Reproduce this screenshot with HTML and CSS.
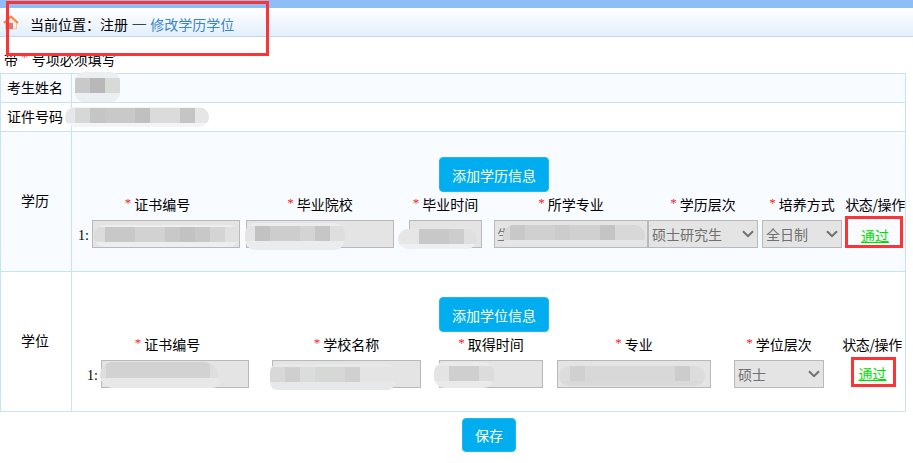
FILE: index.html
```html
<!DOCTYPE html>
<html lang="zh-CN">
<head>
<meta charset="utf-8">
<title>修改学历学位</title>
<link rel="stylesheet" href="styles.css">
</head>
<body>
<div class="page">
  <div class="band"></div>
  <div class="crumbs">
    <svg class="home" viewBox="0 0 16 15" width="16" height="15">
      <path d="M2.5 7.5V14H13.5V7.5L8 2.5Z" fill="#f6ece6" stroke="#e8c4a8" stroke-width="1"/>
      <path d="M1 8L8 1.5L15 8" fill="none" stroke="#ee8a3c" stroke-width="2"/>
      <rect x="6" y="8" width="4" height="6" fill="#d9787a"/>
    </svg>
    <span class="crumb-text">当前位置：注册 <span class="dash">—</span> <a class="crumb-link">修改学历学位</a></span>
  </div>
  <div class="note">带 <span class="star">*</span> 号项必须填写</div>
  <table class="form">
    <colgroup><col class="c-label"><col></colgroup>
    <tr class="row-short shade">
      <td class="label">考生姓名</td>
      <td class="value"><span class="smudge sm-name"></span></td>
    </tr>
    <tr class="row-short">
      <td class="label">证件号码</td>
      <td class="value"><span class="smudge sm-id"></span></td>
    </tr>
    <tr class="row-tall shade">
      <td class="label">学历</td>
      <td class="block">
        <div class="add"><button class="btn btn-add" type="button">添加学历信息</button></div>
        <div class="grid grid-edu">
          <div class="head"><span class="star">*</span>证书编号</div>
          <div class="head"><span class="star">*</span>毕业院校</div>
          <div class="head"><span class="star">*</span>毕业时间</div>
          <div class="head"><span class="star">*</span>所学专业</div>
          <div class="head"><span class="star">*</span>学历层次</div>
          <div class="head"><span class="star">*</span>培养方式</div>
          <div class="head head-status">状态/操作</div>

          <div class="cell cell-first e1"><span class="num">1:</span><div class="field w148"><input class="inp" disabled><span class="smudge sm-e1"></span></div></div>
          <div class="cell"><div class="field w148"><input class="inp" disabled><span class="smudge sm-e2"></span></div></div>
          <div class="cell"><div class="field w73"><input class="inp" disabled><span class="smudge sm-e3"></span></div></div>
          <div class="cell"><div class="field w154"><input class="inp" disabled value="生"><span class="smudge sm-e4"></span></div></div>
          <div class="cell"><select class="sel w110" disabled><option>硕士研究生</option></select></div>
          <div class="cell"><select class="sel w80" disabled><option>全日制</option></select></div>
          <div class="cell"><div class="status status-edu"><a class="pass">通过</a></div></div>
        </div>
      </td>
    </tr>
    <tr class="row-tall">
      <td class="label">学位</td>
      <td class="block">
        <div class="add"><button class="btn btn-add" type="button">添加学位信息</button></div>
        <div class="grid grid-deg">
          <div class="head"><span class="star">*</span>证书编号</div>
          <div class="head"><span class="star">*</span>学校名称</div>
          <div class="head"><span class="star">*</span>取得时间</div>
          <div class="head"><span class="star">*</span>专业</div>
          <div class="head"><span class="star">*</span>学位层次</div>
          <div class="head head-status">状态/操作</div>

          <div class="cell cell-first d1"><span class="num">1:</span><div class="field w148"><input class="inp" disabled><span class="smudge sm-d1"></span></div></div>
          <div class="cell"><div class="field w149"><input class="inp" disabled><span class="smudge sm-d2"></span></div></div>
          <div class="cell"><div class="field w104"><input class="inp" disabled><span class="smudge sm-d3"></span></div></div>
          <div class="cell"><div class="field w154"><input class="inp" disabled><span class="smudge sm-d4"></span></div></div>
          <div class="cell"><select class="sel w90" disabled><option>硕士</option></select></div>
          <div class="cell"><div class="status status-deg"><a class="pass">通过</a></div></div>
        </div>
      </td>
    </tr>
  </table>
  <div class="save"><button class="btn btn-save" type="button">保存</button></div>
  <div class="callout"></div>
</div>
</body>
</html>
```
FILE: styles.css
```css
* { box-sizing: border-box; }
html, body { margin: 0; padding: 0; background: #fff; }
body {
  font-family: "Noto Sans CJK SC", "Liberation Sans", sans-serif;
  font-size: 14px;
  color: #000;
  overflow: hidden;
}
.page { position: relative; width: 913px; height: 463px; }

.band { height: 8px; background: #8fbdf5; }
.crumbs {
  height: 29px;
  display: flex;
  align-items: center;
  padding: 2px 0 0 3px;
  background: linear-gradient(#ffffff, #e3effc);
  border-bottom: 1px solid #bcdaf5;
}
.home { flex: none; margin-top: -2px; }
.crumb-text { margin-left: 11px; line-height: 20px; }
.dash { font-size: 16px; color: #111; }
.crumb-link { color: #3a86ca; }

.note { height: 36px; padding: 12px 0 0 4px; line-height: 20px; }
.star { color: #f02020; font-family: "Liberation Serif", serif; margin-right: 3px; font-size: 13px; position: relative; top: -1px; }
.note .star { margin-right: 1px; top: -4px; }

.form { border-collapse: collapse; table-layout: fixed; width: 906px; }
.form td { border: 1px solid #c8e2f5; padding: 0; }
.c-label { width: 71px; }
.shade td { background: #f8fbff; }
.row-short td { height: 29px; }
.row-tall td { height: 140px; }
.form .label { text-align: center; line-height: 20px; padding: 0 2px 2px 0; }
.form .row-tall .label { padding-bottom: 4px; }
.value { position: relative; }
.block { vertical-align: top; }

.add { display: flex; justify-content: center; padding: 25px 0 0 11px; }
.btn {
  border: 1px solid #20b8f0;
  border-radius: 4px;
  background: #00aeef;
  color: #fff;
  font: 14px "Noto Sans CJK SC", sans-serif;
  padding: 0;
}
.btn-add { width: 110px; height: 35px; }
.btn-save { width: 54px; height: 34px; }
.save { padding: 6px 0 0 462px; }

.grid { display: grid; }
.grid-edu { grid-template-columns: 171px 154px 97px 154px 110px 88px 58px; grid-template-rows: 24px 33px; }
.grid-deg { grid-template-columns: 191px 167px 122px 164px 126px 60px; grid-template-rows: 24px 33px; }
.head { display: flex; align-items: center; justify-content: center; white-space: nowrap; line-height: 20px; }
.head-status { letter-spacing: -0.4px; }
.cell { display: flex; justify-content: center; align-items: flex-end; padding-bottom: 1px; position: relative; }
.cell-first { justify-content: flex-end; }
.e1 { padding-right: 3px; }
.d1 { padding-right: 14px; }
.num { font-family: "Liberation Serif", serif; margin-right: 3px; margin-bottom: 3px; line-height: 18px; }

.field { position: relative; height: 28px; }
.w148 { width: 148px; }
.w149 { width: 149px; }
.w73 { width: 73px; }
.w104 { width: 104px; }
.w154 { width: 154px; }
.inp {
  display: block;
  width: 100%;
  height: 28px;
  background: #e4e4e4;
  border: 1px solid #b9b9b9;
  padding: 0 2px;
  color: #777;
  font: 14px "Noto Sans CJK SC", sans-serif;
}
.sel {
  appearance: none;
  height: 28px;
  background-color: #e4e4e4;
  background-image: url("data:image/svg+xml,%3Csvg xmlns='http://www.w3.org/2000/svg' width='12' height='8'%3E%3Cpath d='M1 1.2L6 6.2L11 1.2' fill='none' stroke='%23707070' stroke-width='2'/%3E%3C/svg%3E");
  background-repeat: no-repeat;
  background-position: right 3px center;
  border: 1px solid #b9b9b9;
  color: #707070;
  font: 14px "Noto Sans CJK SC", sans-serif;
  opacity: 1;
  margin: 0;
  padding: 0 0 0 3px;
}
.w110 { width: 110px; }
.w80 { width: 80px; }
.w90 { width: 90px; }

.status { display: flex; align-items: center; justify-content: center; border: 3px solid #fb3438; position: absolute; }
.status-edu { width: 58px; height: 32px; left: -1px; bottom: 1px; padding: 5px 0 0 2px; }
.status-deg { width: 45px; height: 30px; left: 9px; bottom: 2px; padding: 1px 2px 0 0; }
.pass { color: #00e000; text-decoration: underline; line-height: 18px; white-space: nowrap; }

.callout {
  position: absolute;
  left: 6px;
  top: 1px;
  width: 263px;
  height: 55px;
  border: 3px solid #fb3438;
}

.smudge { position: absolute; display: block; border-radius: 11px; pointer-events: none; background-repeat: no-repeat; }
.sm-name {
  left: 3px; top: -2px; width: 45px; height: 30px; border-radius: 9px;
  background-color: #eceff1;
  background-image: linear-gradient(90deg, #c9c9c9 0 15px, #b8b8b8 15px 30px, #d8dad8 30px 45px);
  background-size: 100% 15px; background-position: 0 6px;
}
.sm-id {
  left: -7px; top: 4px; width: 144px; height: 20px; border-radius: 10px;
  background-color: #f2f4f7;
  background-image: linear-gradient(90deg, #e6e7e9 0 10px, #d5d8d6 10px 25px, #c5c5c5 25px 40px, #c9c9c9 40px 70px, #c0c0c0 70px 85px, #dcdbdb 85px 115px, #c5c5c5 115px 130px, #e6e6e6 130px 144px);
  background-size: 100% 15px; background-position: 0 1px;
}
.sm-e1 {
  left: 2px; top: 5px; width: 145px; height: 22px;
  background-color: #eceeef;
  background-image: linear-gradient(90deg, #dcdcdc 0 11px, #c8c8c8 11px 41px, #d2d2d2 41px 71px, #c8c8c8 71px 86px, #c2c2c2 86px 101px, #c8c8c8 101px 116px, #d4d4d4 116px 131px, #e0e0e0 131px 145px);
  background-size: 100% 15px; background-position: 0 2px;
}
.sm-e2 {
  left: -1px; top: 3px; width: 100px; height: 27px;
  background-color: #ebecee;
  background-image: linear-gradient(90deg, #e4e4e4 0 10px, #c2c2c2 10px 25px, #cdcdcd 25px 55px, #d4d4d4 55px 70px, #c6c6c6 70px 85px, #dedede 85px 100px);
  background-size: 100% 15px; background-position: 0 3px;
}
.sm-e3 {
  left: -11px; top: 9px; width: 79px; height: 20px;
  background-color: #eeeff1;
  background-image: linear-gradient(90deg, #e6e6e6 0 21px, #c8c8c8 21px 51px, #cdcdcd 51px 66px, #e0e0e0 66px 79px);
  background-size: 100% 15px; background-position: 0 0;
}
.sm-e4 {
  left: 9px; top: 5px; width: 142px; height: 22px;
  background-color: #e6e6e6;
  background-image: linear-gradient(90deg, #d8d8d8 0 7px, #c8c8c8 7px 22px, #d0d0d0 22px 52px, #cccccc 52px 67px, #d0d0d0 67px 97px, #c4c4c4 97px 112px, #d8d8d8 112px 142px);
  background-size: 100% 15px; background-position: 0 0;
}
.sm-d1 {
  left: -1px; top: 2px; width: 119px; height: 26px; border-radius: 13px 16px 6px 13px;
  background-color: #e8e8e8;
  background-image: linear-gradient(90deg, #dedede 0 6px, #d2d2d2 6px 110px, #dedede 110px 119px);
  background-size: 100% 16px; background-position: 0 0;
}
.sm-d2 {
  left: -2px; top: 4px; width: 125px; height: 26px; border-radius: 8px;
  background-color: #e6e8ea;
  background-image: linear-gradient(90deg, #d8d8d8 0 15px, #cfcfcf 15px 30px, #dcdcdc 30px 45px, #d6d8d6 45px 75px, #d0d0d0 75px 90px, #e4e4e4 90px 125px);
  background-size: 100% 15px; background-position: 0 3px;
}
.sm-d3 {
  left: -5px; top: 2px; width: 60px; height: 26px;
  background-color: #eaeaea;
  background-image: linear-gradient(90deg, #e4e4e4 0 15px, #cfcfcf 15px 45px, #dcdcdc 45px 60px);
  background-size: 100% 15px; background-position: 0 4px;
}
.sm-d4 {
  left: 2px; top: 6px; width: 146px; height: 20px; border-radius: 10px;
  background-color: #d9d9d9;
  background-image: linear-gradient(90deg, #dcdcdc 0 11px, #d0d0d0 11px 26px, #d8d8d8 26px 116px, #cccccc 116px 131px, #dcdcdc 131px 146px);
  background-size: 100% 15px; background-position: 0 0;
}
```
